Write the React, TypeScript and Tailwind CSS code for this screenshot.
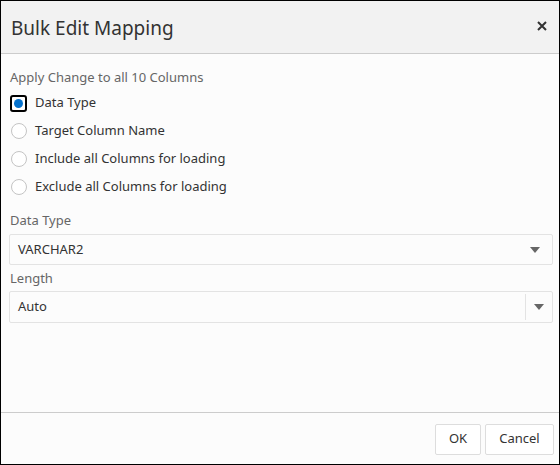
import React, { useState } from 'react';

const options = [
  'Data Type',
  'Target Column Name',
  'Include all Columns for loading',
  'Exclude all Columns for loading',
];

const Caret = () => (
  <svg width="10" height="6" viewBox="0 0 10 6" className="block">
    <path d="M0 0 L10 0 L5 6 Z" fill="#666666" />
  </svg>
);

const Radio: React.FC<{ checked: boolean; focused?: boolean }> = ({ checked, focused }) => {
  if (checked) {
    return (
      <div
        className={`w-[17px] h-[17px] shrink-0 flex items-center justify-center rounded-[3px] bg-white ${
          focused ? 'border-2 border-black' : ''
        }`}
      >
        <div className="w-[9px] h-[9px] rounded-full bg-[#0572ce]" />
      </div>
    );
  }
  return (
    <div className="w-[17px] h-[17px] shrink-0 flex items-center justify-center">
      <div className="w-[16px] h-[16px] rounded-full border border-[#c4c4c4] bg-white" />
    </div>
  );
};

export default function App() {
  const [selected, setSelected] = useState(0);

  return (
    <div
      className="w-[560px] h-[465px] border border-black bg-[#fcfcfc] flex flex-col text-[#333333]"
      style={{ fontFamily: '"Noto Sans", "Open Sans", sans-serif' }}
    >
      <div className="h-[53px] shrink-0 bg-[#f2f2f2] border-b border-[#cccccc] flex items-center justify-between pl-[10px] pr-[9px]">
        <h1 className="text-[19px] text-[#333333] leading-none pt-[3px]">Bulk Edit Mapping</h1>
        <button className="w-[16px] h-[16px] mb-[2px] flex items-center justify-center">
          <svg width="10" height="10" viewBox="0 0 10 10">
            <path d="M1 1 L9 9 M9 1 L1 9" stroke="#333333" strokeWidth="2" />
          </svg>
        </button>
      </div>

      <div className="flex-1 px-[8px] pt-[14px]">
        <div className="text-[13px] text-[#666666] leading-[18px] pl-[1px]">Apply Change to all 10 Columns</div>

        <div className="mt-[3px] flex flex-col">
          {options.map((label, idx) => (
            <button
              key={label}
              onClick={() => setSelected(idx)}
              className="h-[28px] flex items-center gap-[8px] pl-[1px] text-left"
            >
              <Radio checked={selected === idx} focused={idx === 0} />
              <span className="text-[13px] text-[#333333]">{label}</span>
            </button>
          ))}
        </div>

        <div className="mt-[10px] text-[13px] text-[#666666] leading-[18px] pl-[1px]">Data Type</div>
        <div className="mt-[5px] h-[31px] mr-[-2px] border border-[#e3e3e3] rounded-[2px] bg-[#fcfcfc] flex items-center justify-between pl-[8px] pr-[12px]">
          <span className="text-[13px] text-[#333333]">VARCHAR2</span>
          <Caret />
        </div>

        <div className="mt-[4px] text-[13px] text-[#666666] leading-[18px] pl-[1px]">Length</div>
        <div className="mt-[4px] h-[32px] mr-[-2px] border border-[#e3e3e3] rounded-[2px] bg-[#fcfcfc] flex items-center">
          <span className="flex-1 pl-[8px] text-[13px] text-[#333333]">Auto</span>
          <div className="h-[26px] border-l border-[#e3e3e3]" />
          <div className="w-[26px] flex items-center justify-center">
            <Caret />
          </div>
        </div>
      </div>

      <div className="h-[52px] shrink-0 border-t border-[#cccccc] flex items-center justify-end gap-[4px] pr-[5px] pt-[1px]">
        <button className="h-[31px] w-[46px] border border-[#dddddd] rounded-[2px] bg-white text-[13px] text-[#333333]">
          OK
        </button>
        <button className="h-[31px] w-[69px] border border-[#dddddd] rounded-[2px] bg-white text-[13px] text-[#333333]">
          Cancel
        </button>
      </div>
    </div>
  );
}
